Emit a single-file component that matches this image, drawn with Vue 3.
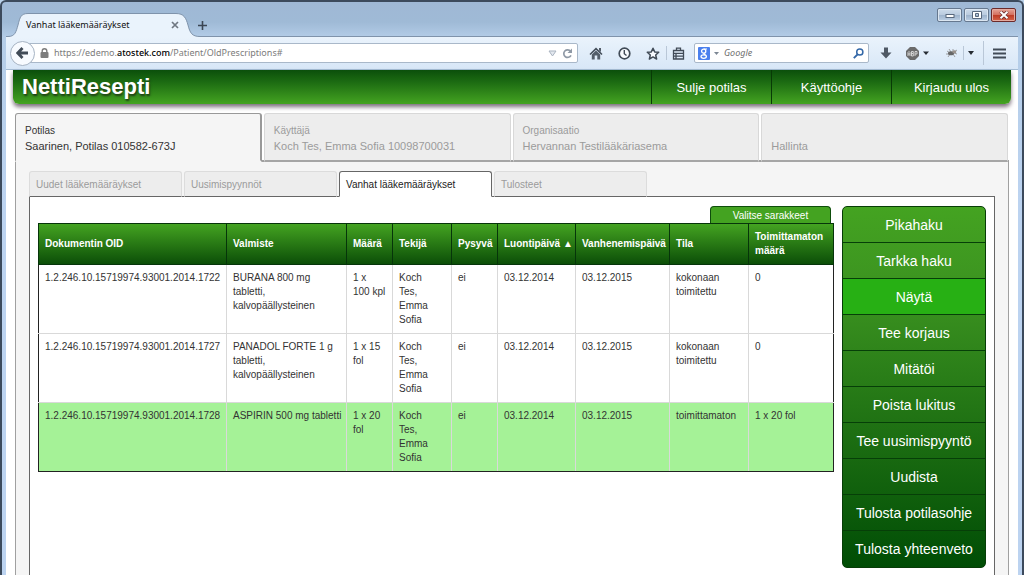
<script setup>
import { ref } from 'vue'

const search = ref('')
const nav = ['Sulje potilas', 'Käyttöohje', 'Kirjaudu ulos']
const contexts = [
  { label: 'Potilas', value: 'Saarinen, Potilas 010582-673J' },
  { label: 'Käyttäjä', value: 'Koch Tes, Emma Sofia 10098700031' },
  { label: 'Organisaatio', value: 'Hervannan Testilääkäriasema' },
  { label: '', value: 'Hallinta' },
]
const activeContext = ref(0)
const views = ['Uudet lääkemääräykset', 'Uusimispyynnöt', 'Vanhat lääkemääräykset', 'Tulosteet']
const activeView = ref(2)
const columns = [
  { key: 'oid', title: 'Dokumentin OID' },
  { key: 'product', title: 'Valmiste' },
  { key: 'amount', title: 'Määrä' },
  { key: 'author', title: 'Tekijä' },
  { key: 'permanent', title: 'Pysyvä' },
  { key: 'created', title: 'Luontipäivä ▲' },
  { key: 'expires', title: 'Vanhenemispäivä' },
  { key: 'state', title: 'Tila' },
  { key: 'remaining', title: 'Toimittamaton\nmäärä' },
]
const common = { author: 'Koch\nTes,\nEmma\nSofia', permanent: 'ei', created: '03.12.2014', expires: '03.12.2015' }
const rows = [
  { ...common, oid: '1.2.246.10.15719974.93001.2014.1722', product: 'BURANA 800 mg\ntabletti,\nkalvopäällysteinen', amount: '1 x\n100 kpl', state: 'kokonaan\ntoimitettu', remaining: '0' },
  { ...common, oid: '1.2.246.10.15719974.93001.2014.1727', product: 'PANADOL FORTE 1 g\ntabletti,\nkalvopäällysteinen', amount: '1 x 15\nfol', state: 'kokonaan\ntoimitettu', remaining: '0' },
  { ...common, oid: '1.2.246.10.15719974.93001.2014.1728', product: 'ASPIRIN 500 mg tabletti', amount: '1 x 20\nfol', state: 'toimittamaton', remaining: '1 x 20 fol' },
]
const selectedRow = ref(2)
const actions = [
  'Pikahaku', 'Tarkka haku', 'Näytä', 'Tee korjaus', 'Mitätöi',
  'Poista lukitus', 'Tee uusimispyyntö', 'Uudista', 'Tulosta potilasohje', 'Tulosta yhteenveto',
]
</script>

<template>
  <div class="window">
    <div class="titlebar">
      <div class="browser-tab">
        <svg class="tab-shape" viewBox="0 0 192 24" aria-hidden="true">
          <path d="M0 23.500C7 23.500 8 19 10 12C12 4 13 .5 20 .5H168C176 .5 178 5 180 12C182 20 184 23.500 192 23.500V24H0Z" fill="#eaf3fc" />
          <path d="M0 23.500C7 23.500 8 19 10 12C12 4 13 .5 20 .5H168C176 .5 178 5 180 12C182 20 184 23.500 192 23.500" fill="none" stroke="#7f93ab" />
        </svg>
        <span class="tab-title">Vanhat lääkemääräykset</span>
        <button class="plain" aria-label="Sulje välilehti">
          <svg width="8" height="8" viewBox="0 0 8 8"><path d="M1 1L7 7M7 1L1 7" stroke="#6f7781" stroke-width="1.700" /></svg>
        </button>
      </div>
      <button class="plain new-tab" aria-label="Uusi välilehti">
        <svg width="9" height="9" viewBox="0 0 9 9"><path d="M4.500 0V9M0 4.500H9" stroke="#3b4654" stroke-width="1.600" /></svg>
      </button>
      <div class="controls">
        <button class="control" aria-label="Pienennä">
          <svg width="10" height="8" viewBox="0 0 10 8"><rect x="1" y="3.500" width="8" height="3" fill="#fff" stroke="#59687d" /></svg>
        </button>
        <button class="control" aria-label="Suurenna">
          <svg width="10" height="8" viewBox="0 0 10 8"><path d="M.5 .5H9.500V7.500H.5ZM3.500 2.500V5.500H6.500V2.500Z" fill="#fff" fill-rule="evenodd" stroke="#59687d" /></svg>
        </button>
        <button class="control close" aria-label="Sulje ikkuna">
          <svg width="10" height="8" viewBox="0 0 10 8"><path d="M1.500 .5L8.500 7.500M8.500 .5L1.500 7.500" stroke="#6b3030" stroke-width="3.400" /><path d="M1.500 .8L8.500 7.200M8.500 .8L1.500 7.200" stroke="#fff" stroke-width="2" /></svg>
        </button>
      </div>
    </div>

    <div class="toolbar">
      <button class="back" aria-label="Takaisin">
        <svg width="13" height="12" viewBox="0 0 13 12"><path d="M6.500 1L1.800 6L6.500 11M2 6H12" fill="none" stroke="#414b57" stroke-width="2.800" /></svg>
      </button>
      <div class="url">
        <svg width="9" height="10" viewBox="0 0 9 10" aria-hidden="true"><rect x=".5" y="4" width="8" height="6" rx="1" fill="#7d7d7d" /><path d="M2.200 4.500V3A2.300 2.300 0 0 1 6.800 3V4.500" fill="none" stroke="#7d7d7d" stroke-width="1.400" /></svg>
        <div class="address" role="textbox" aria-label="Osoite" contenteditable="true" spellcheck="false">https://edemo.<b>atostek.com</b>/Patient/OldPrescriptions#</div>
        <button class="plain" aria-label="Historia">
          <svg width="9" height="7" viewBox="0 0 9 7"><path d="M1 1H8L4.500 6Z" fill="#e3e8ef" stroke="#a9b3c0" /></svg>
        </button>
        <button class="plain" aria-label="Päivitä">
          <svg width="11" height="11" viewBox="0 0 11 11"><path d="M8.600 3.300A3.800 3.800 0 1 0 9 7.300" fill="none" stroke="#8f99a6" stroke-width="1.700" /><path d="M10 .5V5H5.500Z" fill="#8f99a6" /></svg>
        </button>
      </div>
      <button class="plain tool" aria-label="Koti">
        <svg width="14" height="13" viewBox="0 0 14 13"><path d="M1 7.500L7 1.700L13 7.500" fill="none" stroke="#454f5b" stroke-width="1.600" /><path d="M10 1H12V5L10 3.500ZM2.800 7.500L7 3.600L11.200 7.500V12.500H8.300V8.500H5.700V12.500H2.800Z" fill="#545e6a" /></svg>
      </button>
      <button class="plain tool" aria-label="Viimeisimmät">
        <svg width="13" height="13" viewBox="0 0 13 13"><circle cx="6.500" cy="6.500" r="5.300" fill="#f8fbff" stroke="#414b57" stroke-width="1.700" /><path d="M6.300 3V6.700L8.500 8.500" fill="none" stroke="#414b57" stroke-width="1.400" /></svg>
      </button>
      <button class="plain tool star" aria-label="Lisää kirjanmerkki">
        <svg width="14" height="13" viewBox="0 0 14 13"><path d="M7 1.200L8.700 4.900L12.700 5.300L9.700 8L10.600 12L7 9.900L3.400 12L4.300 8L1.300 5.300L5.300 4.900Z" fill="#f8fbff" stroke="#414b57" stroke-width="1.500" stroke-linejoin="round" /></svg>
      </button>
      <i class="rule"></i>
      <button class="plain list" aria-label="Kirjanmerkit">
        <svg width="13" height="13" viewBox="0 0 13 13"><path d="M1.500 3.500H11.500V12H1.500ZM1.500 6.300H11.500M1.500 9.200H11.500M4 6V12" fill="none" stroke="#414b57" stroke-width="1.300" /><path d="M4.500 3.500V1.200H8.500V3.500" fill="none" stroke="#414b57" stroke-width="1.300" /></svg>
      </button>
      <div class="search">
        <svg width="12" height="13" viewBox="0 0 12 13" aria-hidden="true"><rect width="12" height="13" rx="1" fill="#4a80ee" /><ellipse cx="5.700" cy="4.200" rx="2.100" ry="2" fill="none" stroke="#fff" stroke-width="1.300" /><path d="M5.700 2H9M6.500 6C5 7 6.500 7.200 7.500 8" fill="none" stroke="#fff" stroke-width="1.200" /><ellipse cx="5.700" cy="9.600" rx="2.700" ry="1.700" fill="none" stroke="#fff" stroke-width="1.300" /></svg>
        <svg width="5" height="3" viewBox="0 0 5 3" aria-hidden="true"><path d="M0 0H5L2.500 3Z" fill="#7c8794" /></svg>
        <input v-model="search" type="text" placeholder="Google" aria-label="Haku" />
        <button class="plain" aria-label="Hae">
          <svg width="11" height="11" viewBox="0 0 11 11"><circle cx="6.800" cy="4" r="3.100" fill="none" stroke="#3468a8" stroke-width="1.500" /><path d="M4.600 6.300L.8 10.200" stroke="#3468a8" stroke-width="1.900" /></svg>
        </button>
      </div>
      <button class="plain download" aria-label="Lataukset">
        <svg width="12" height="12" viewBox="0 0 12 12"><path d="M4 .5H8V5.500H11.500L6 11.500L.5 5.500H4Z" fill="#4f5965" /></svg>
      </button>
      <button class="plain addon" aria-label="Mainosten esto">
        <svg width="24" height="13" viewBox="0 0 24 13"><path d="M4 0H9L13 4V9L9 13H4L0 9V4Z" fill="#6b6b6b" /><path d="M2 9V5.500L3 4.500L4 5.500V9M2 7H4M5.500 9V4.500H7.300V6.500H5.500M7.300 6.500V9H5.500M9 9V4.500H11V7H9" fill="none" stroke="#dcdcdc" stroke-width=".9" /><path d="M17 4.500H23L20 8Z" fill="#252b32" /></svg>
      </button>
      <button class="plain bug" aria-label="Firebug">
        <svg width="12" height="10" viewBox="0 0 12 10"><path d="M1 3L4 5M3 1L5 4M7 1L7 4M11 2L8 4M11 6L8 5M9 9L7 6M2 9L4 6M0 6H3" fill="none" stroke="#8b8b8b" stroke-width=".8" /><ellipse cx="5" cy="5.300" rx="3" ry="2" fill="#666" /><ellipse cx="8.300" cy="3.800" rx="2" ry="1.500" fill="#99918c" /></svg>
      </button>
      <i class="rule"></i>
      <button class="plain more" aria-label="Lisää">
        <svg width="6" height="4" viewBox="0 0 6 4"><path d="M0 0H6L3 4Z" fill="#252b32" /></svg>
      </button>
      <i class="rule tall"></i>
      <button class="plain menu" aria-label="Valikko">
        <svg width="13" height="11" viewBox="0 0 13 11"><path d="M0 1.500H13M0 5.500H13M0 9.500H13" stroke="#414b57" stroke-width="2" /></svg>
      </button>
    </div>

    <main class="page">
      <header class="site-header">
        <h1>NettiResepti</h1>
        <nav>
          <a v-for="item in nav" :key="item" href="#">{{ item }}</a>
        </nav>
      </header>

      <div class="contexts" role="tablist">
        <button v-for="(c, i) in contexts" :key="c.value" role="tab" :aria-selected="i === activeContext" class="context" :class="{ active: i === activeContext }" @click="activeContext = i">
          <span class="context-label">{{ c.label }}</span>
          <span class="context-value">{{ c.value }}</span>
        </button>
      </div>

      <section class="panel">
        <div class="views" role="tablist">
          <button v-for="(v, i) in views" :key="v" role="tab" :aria-selected="i === activeView" class="view" :class="{ active: i === activeView }" @click="activeView = i">{{ v }}</button>
        </div>
        <div class="sheet">
          <div class="results">
            <button class="choose">Valitse sarakkeet</button>
            <table>
              <colgroup>
                <col v-for="c in columns" :key="c.key" :class="c.key" />
              </colgroup>
              <thead>
                <tr>
                  <th v-for="c in columns" :key="c.key" scope="col">{{ c.title }}</th>
                </tr>
              </thead>
              <tbody>
                <tr v-for="(r, i) in rows" :key="r.oid" :class="{ selected: i === selectedRow }" @click="selectedRow = i">
                  <td v-for="c in columns" :key="c.key">{{ r[c.key] }}</td>
                </tr>
              </tbody>
            </table>
          </div>
          <div class="actions">
            <button v-for="a in actions" :key="a" :class="{ current: a === 'Näytä' }">{{ a }}</button>
          </div>
        </div>
      </section>
    </main>
  </div>
</template>

<style>
body {
  background: #b9d1ea;
}
</style>

<style scoped>
* {
  box-sizing: border-box;
}
button {
  font-family: inherit;
  cursor: pointer;
}
svg {
  display: block;
  flex: none;
}
.window {
  display: flex;
  flex-direction: column;
  min-height: 100vh;
  padding: 0 4px;
  border: 2px solid #3c4a5c;
  border-bottom: 0;
  border-radius: 6px 6px 0 0;
  background: linear-gradient(#9fb8d5, #9fbad6 20px, #b4cde8 36px, #bcd3f0 200px);
  font-family: "Liberation Sans", Arial, sans-serif;
}
.plain {
  display: flex;
  align-items: center;
  justify-content: center;
  padding: 0;
  border: 0;
  background: none;
}

/* Browser chrome */
.titlebar {
  display: flex;
  height: 35px;
  padding-left: 2px;
  border-bottom: 1px solid #7f93ab;
}
.browser-tab {
  position: relative;
  display: flex;
  align-items: center;
  justify-content: space-between;
  width: 192px;
  height: 24px;
  margin-top: 11px;
  padding: 0 21px 0 18px;
}
.tab-shape {
  position: absolute;
  inset: 0;
  width: 100%;
  height: 100%;
}
.tab-title {
  position: relative;
  font: 9px/14px "Noto Sans", sans-serif;
  color: #111;
}
.browser-tab .plain {
  position: relative;
}
.new-tab {
  width: 12px;
  margin-top: 13px;
  margin-left: -4px;
}
.controls {
  display: flex;
  gap: 2px;
  margin: 6px 2px 0 auto;
}
.control {
  display: flex;
  align-items: center;
  justify-content: center;
  width: 25px;
  height: 14px;
  padding: 0;
  border: 1px solid #66788f;
  border-radius: 2px;
  background: linear-gradient(#cddbea, #bacbdf 48%, #9cb2cb 50%, #bdd0e5);
  box-shadow: inset 0 0 0 1px #dbe6f1;
}
.control.close {
  border-color: #6b2a2a;
  background: linear-gradient(#e5a498, #d4705f 48%, #bd3a24 50%, #d5644a);
  box-shadow: inset 0 0 0 1px #e4aba0;
}
.toolbar {
  display: flex;
  align-items: center;
  height: 33px;
  padding: 0 4px;
  border-bottom: 1px solid #a5bdd5;
  background: linear-gradient(#eaf3fc, #d8e7f7);
}
.back {
  display: flex;
  align-items: center;
  justify-content: center;
  z-index: 1;
  width: 25px;
  height: 25px;
  margin-right: -13px;
  padding: 0;
  border: 1px solid #a6b3c3;
  border-radius: 50%;
  background: #f8fbff;
}
.url {
  display: flex;
  flex: 1;
  align-items: center;
  gap: 5px;
  height: 20px;
  padding: 0 4px 0 17px;
  border: 1px solid #a9b8c9;
  border-radius: 2px;
  background: #fff;
}
.address {
  flex: 1;
  font: 9px/14px "Noto Sans", sans-serif;
  color: #7c7c7c;
  white-space: nowrap;
}
.address b {
  font-weight: 500;
  color: #000;
}
.tool {
  width: 29px;
}
.url + .tool {
  margin-left: 3px;
}
.star {
  width: 27px;
}
.rule {
  width: 1px;
  height: 14px;
  background: #b9c7d7;
}
.rule.tall {
  height: 24px;
  margin-left: 5px;
}
.list {
  width: 22px;
}
.search {
  display: flex;
  align-items: center;
  gap: 4px;
  width: 175px;
  height: 20px;
  margin-left: 5px;
  padding: 0 4px 0 3px;
  border: 1px solid #a9b8c9;
  border-radius: 2px;
  background: #fff;
}
.search input {
  flex: 1;
  min-width: 0;
  padding: 0 1px;
  border: 0;
  outline: 0;
  background: none;
  font: italic 9px/14px "Noto Sans", sans-serif;
}
.search input::placeholder {
  color: #6f6f6f;
}
.download {
  width: 34px;
}
.addon,
.bug,
.menu {
  width: 30px;
}
.bug {
  padding-left: 7px;
}
.more {
  width: 14px;
}

/* Application */
.page {
  display: flex;
  flex: 1;
  flex-direction: column;
  background: #fff;
}
.site-header {
  display: flex;
  align-items: stretch;
  justify-content: space-between;
  height: 34px;
  margin: 0 7px;
  border-radius: 0 0 6px 6px;
  background: linear-gradient(#0b4f0b, #1c6b12 35%, #44a321);
  box-shadow: 0 3px 4px #7d707d;
}
.site-header h1 {
  margin: 0;
  padding-left: 9px;
  font-size: 22px;
  line-height: 34px;
  color: #fff;
  text-shadow: 1px 2px 2px #1f3d17;
}
.site-header nav {
  display: flex;
}
.site-header a {
  width: 120px;
  border-left: 1px solid #083a06;
  font-size: 13px;
  line-height: 35px;
  text-align: center;
  text-decoration: none;
  color: #fff;
}
.contexts {
  display: grid;
  grid-template-columns: repeat(4, 1fr);
  gap: 2px;
  z-index: 1;
  margin: 9px 10px -2px 9px;
}
.context {
  display: flex;
  flex-direction: column;
  height: 49px;
  padding: 9px 9px 0;
  border: 1px solid #d8d8d8;
  border-bottom: 2px solid #a6a6a6;
  border-radius: 3px 3px 0 0;
  background: #ededed;
  color: #9b9b9b;
  text-align: left;
}
.context.active {
  border-color: #999;
  border-right-width: 2px;
  border-bottom-color: #f5f5f5;
  background: #f5f5f5;
  color: #333;
}
.context-label {
  height: 15px;
  font-size: 10px;
  line-height: 15px;
}
.context-value {
  font-size: 11px;
  line-height: 16px;
}
.panel {
  display: flex;
  flex: 1;
  flex-direction: column;
  margin: 0 9px;
  padding: 9px 13px 0;
  border: solid #a0a0a0;
  border-width: 2px 1px 0;
  background: #f5f5f5;
}
.views {
  display: flex;
  gap: 2px;
  z-index: 1;
  margin-bottom: -1px;
}
.view {
  width: 153px;
  height: 26px;
  padding: 0 6px;
  border: 1px solid #dcdcdc;
  border-bottom-color: #666;
  border-radius: 3px 3px 0 0;
  background: #ededed;
  font-size: 10px;
  color: #9b9b9b;
  text-align: left;
}
.view.active {
  border-color: #666;
  border-bottom-color: #fff;
  background: #fff;
  color: #222;
}
.sheet {
  display: flex;
  flex: 1;
  align-items: flex-start;
  gap: 8px;
  padding: 9px 8px 7px;
  border: solid #666;
  border-width: 1px 1px 0;
  background: #fff;
}
.results {
  display: flex;
  flex: 1;
  flex-direction: column;
  align-items: flex-end;
}
.choose {
  width: 121px;
  height: 17px;
  margin-right: 3px;
  padding: 0;
  border: 1px solid #0e4d0b;
  border-bottom: 0;
  border-radius: 4px 4px 0 0;
  background: #44a321;
  font-size: 10px;
  color: #fff;
}
table {
  width: 100%;
  border: 1px solid #222;
  border-collapse: collapse;
  table-layout: fixed;
  font-size: 10px;
  line-height: 14px;
}
.oid { width: 188px; }
.product { width: 120px; }
.amount { width: 46px; }
.author { width: 59px; }
.permanent { width: 46px; }
.created { width: 78px; }
.expires { width: 94px; }
.state { width: 79px; }
.remaining { width: 85px; }
thead tr {
  background: linear-gradient(#44a321, #0a4c07);
}
th {
  height: 41px;
  padding: 0 2px 0 6px;
  border: 1px solid #06350a;
  color: #fff;
  text-align: left;
  white-space: pre;
}
td {
  height: 69px;
  padding: 6px 4px 6px 6px;
  border: 1px solid #d9d9d9;
  color: #333;
  vertical-align: top;
  white-space: pre-line;
}
td:first-child {
  border-left-color: #222;
}
td:last-child {
  border-right-color: #222;
}
tbody tr:first-child td {
  border-top-color: #06350a;
}
tbody tr:last-child td {
  border-bottom-color: #222;
}
.selected {
  background: #a5f297;
}
.actions {
  display: flex;
  flex-direction: column;
  width: 145px;
  overflow: hidden;
  border: 1px solid #073d07;
  border-radius: 5px;
  background: linear-gradient(#44a321, #3b9220 25%, #004d05);
}
.actions button {
  height: 36px;
  padding: 0;
  border: 0;
  border-bottom: 1px solid #063f08;
  background: none;
  font-size: 14px;
  color: #fff;
}
.actions button:last-child {
  border-bottom: 0;
}
.actions .current {
  background: #27b014;
}
</style>
